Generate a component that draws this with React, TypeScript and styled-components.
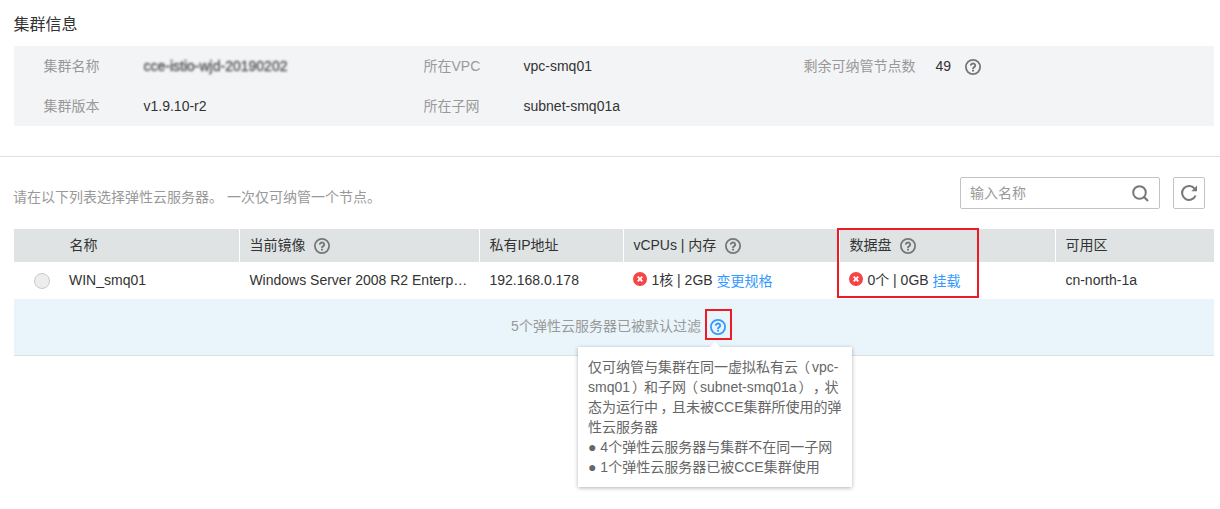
import React from "react";
import styled, { createGlobalStyle } from "styled-components";

const GlobalStyle = createGlobalStyle`
  * { box-sizing: border-box; }
  body {
    margin: 0;
    background: #fff;
    overflow: hidden;
    font: 14px/20px "Liberation Sans", "Noto Sans CJK SC", sans-serif;
    color: #333;
    text-spacing-trim: space-all;
  }
`;

const Page = styled.main`
  position: relative;
  width: 1220px;
  height: 509px;
  overflow: hidden;
`;

const Title = styled.h1`
  margin: 0;
  padding: 15px 0 0 13.5px;
  height: 46px;
  font-size: 16px;
  line-height: 20px;
  font-weight: 400;
`;

const InfoPanel = styled.dl`
  margin: 0 6px 0 14px;
  padding: 0 0 0 29.5px;
  height: 80px;
  background: #f3f4f6;
  display: grid;
  grid-template-columns: 380px 380px 1fr;
  grid-template-rows: 40px 40px;
`;

const InfoItem = styled.div<{ $labelWidth?: number }>`
  display: grid;
  grid-template-columns: ${(p) => p.$labelWidth ?? 100}px 1fr;
  align-items: center;
`;

const Label = styled.dt`
  color: #999;
`;

const Value = styled.dd`
  margin: 0;
  display: flex;
  align-items: center;
  gap: 14px;
`;

const Masked = styled.span`
  color: #555;
  -webkit-text-stroke: 0.4px #555;
  filter: blur(1.3px);
`;

const Divider = styled.hr`
  margin: 30px 0 0;
  border: 0;
  height: 1px;
  background: #dfdfdf;
`;

const Toolbar = styled.div`
  display: flex;
  align-items: center;
  height: 32px;
  margin: 20px 15px 20px 13px;
`;

const Hint = styled.p`
  margin: 8px auto 0 0;
  color: #999;
  white-space: pre;
`;

const SearchBox = styled.div`
  display: flex;
  align-items: center;
  justify-content: space-between;
  width: 200px;
  height: 32px;
  padding: 0 10px 0 9px;
  border: 1px solid #c3c3c3;
  border-radius: 2px;
  color: #999;
`;

const RefreshButton = styled.button`
  display: grid;
  place-items: center;
  width: 32px;
  height: 32px;
  margin-left: 13px;
  padding: 0;
  border: 1px solid #c3c3c3;
  border-radius: 2px;
  background: #fff;
`;

const Table = styled.section`
  margin: 0 6px 0 14px;
`;

const Row = styled.div<{ $head?: boolean }>`
  display: grid;
  grid-template-columns: 226px 240px 144px 216px 216px 1fr;
  height: ${(p) => (p.$head ? 33 : 37)}px;
  background: ${(p) => (p.$head ? "#dfe3e4" : "#fff")};
`;

const Cell = styled.div<{ $head?: boolean; $first?: boolean; $last?: boolean }>`
  display: flex;
  align-items: center;
  min-width: 0;
  padding-left: ${(p) => (p.$first ? (p.$head ? 55.4 : 20) : 9.4)}px;
  padding-bottom: ${(p) => (p.$head ? 2 : 1)}px;
  border-right: ${(p) => (p.$last ? 0 : 1)}px solid ${(p) => (p.$head ? "#fff" : "transparent")};
  white-space: nowrap;
  gap: ${(p) => (p.$head ? 9 : 4)}px;
`;

const Radio = styled.span`
  width: 16px;
  height: 16px;
  margin: 1px 15px 0 0;
  border: 1px solid #c9c9c9;
  border-radius: 50%;
  background: #ededed;
`;

const Link = styled.a`
  color: #3399ff;
  padding-top: 1px;
`;

const FilterBar = styled.div`
  display: flex;
  justify-content: center;
  align-items: center;
  height: 57px;
  padding: 0 0 2px 9px;
  border-bottom: 1px solid #d9dfe2;
  background: #e9f5fb;
  color: #999;
`;

const HelpAnchor = styled.span`
  display: flex;
  margin-left: 9px;
  padding-top: 2px;
`;

const Highlight = styled.span<{ $x: number; $y: number; $w: number; $h: number }>`
  position: absolute;
  left: ${(p) => p.$x}px;
  top: ${(p) => p.$y}px;
  width: ${(p) => p.$w}px;
  height: ${(p) => p.$h}px;
  border: 2px solid #ed1c24;
  z-index: 3;
`;

const Tooltip = styled.div`
  position: absolute;
  left: 578px;
  top: 347px;
  width: 274px;
  height: 140px;
  padding: 10px 9px 0 10px;
  background: #fff;
  color: #666;
  box-shadow: 0 1px 4px rgba(0, 0, 0, 0.3);
  z-index: 2;
  white-space: nowrap;

  &::before {
    content: "";
    position: absolute;
    left: 131px;
    top: -5px;
    border: 6px solid transparent;
    border-top: 0;
    border-bottom-color: #fff;
  }
`;

const Line = styled.div`
  height: 20px;
`;

/* Full-width punctuation whose ink sits nearer the middle of its cell */
const Punct = styled.span<{ $shift: number }>`
  display: inline-block;
  width: 14px;
  text-indent: ${(p) => p.$shift}px;
`;

const Icon = styled.svg`
  display: block;
  flex: none;
  overflow: visible;
`;

const HelpIcon = ({ color = "#777" }: { color?: string }) => (
  <Icon width="16" height="16" viewBox="0 0 16 16" fill="none" stroke={color}>
    <circle cx="8" cy="8" r="7.1" strokeWidth="1.8" />
    <path d="M5.800 6.600a2.200 2 0 1 1 3.500 1.500C8.500 8.700 8 8.900 8 9.900" strokeWidth="1.9" />
    <path d="M8 10.700v1.800" strokeWidth="2" />
  </Icon>
);

const ErrorIcon = () => (
  <Icon width="14" height="14" viewBox="0 0 14 14">
    <circle cx="7" cy="7" r="7" fill="#f54545" />
    <path d="M4.700 4.700l4.600 4.600M9.300 4.700l-4.600 4.600" stroke="#fff" strokeWidth="1.800" />
  </Icon>
);

const SearchIcon = () => (
  <Icon width="17" height="17" viewBox="0 0 17 17" fill="none" stroke="#777" strokeWidth="2">
    <circle cx="7.500" cy="7.500" r="6.300" />
    <path d="M11.800 11.800l4.200 4.200" />
  </Icon>
);

const RefreshIcon = () => (
  <Icon width="16" height="16" viewBox="0 0 16 16" fill="none" stroke="#777" strokeWidth="2">
    <path d="M14.600 10.500A7 7 0 1 1 13.600 3.600" />
    <path d="M16 .6v5.600h-5.600z" fill="#777" stroke="none" />
  </Icon>
);

const Shift = styled.span<{ $y: number }>`
  display: flex;
  margin-top: ${(p) => p.$y}px;
`;

const columns = [
  { name: "名称" },
  { name: "当前镜像", help: true },
  { name: "私有IP地址" },
  { name: "vCPUs | 内存", help: true },
  { name: "数据盘", help: true },
  { name: "可用区" },
];

export default function App() {
  return (
    <>
      <GlobalStyle />
      <Page>
        <Title>集群信息</Title>
        <InfoPanel>
          <InfoItem>
            <Label>集群名称</Label>
            <Value><Masked>cce-istio-wjd-20190202</Masked></Value>
          </InfoItem>
          <InfoItem>
            <Label>所在VPC</Label>
            <Value>vpc-smq01</Value>
          </InfoItem>
          <InfoItem $labelWidth={132}>
            <Label>剩余可纳管节点数</Label>
            <Value>49<Shift $y={2}><HelpIcon /></Shift></Value>
          </InfoItem>
          <InfoItem>
            <Label>集群版本</Label>
            <Value>v1.9.10-r2</Value>
          </InfoItem>
          <InfoItem>
            <Label>所在子网</Label>
            <Value>subnet-smq01a</Value>
          </InfoItem>
        </InfoPanel>
        <Divider />
        <Toolbar>
          <Hint>请在以下列表选择弹性云服务器。 一次仅可纳管一个节点。</Hint>
          <SearchBox>输入名称<SearchIcon /></SearchBox>
          <RefreshButton aria-label="刷新"><RefreshIcon /></RefreshButton>
        </Toolbar>
        <Table>
          <Row $head>
            {columns.map((c, i) => (
              <Cell key={c.name} $head $first={i === 0} $last={i === 5}>
                {c.name}
                {c.help && <Shift $y={3}><HelpIcon /></Shift>}
              </Cell>
            ))}
          </Row>
          <Row>
            <Cell $first><Radio />WIN_smq01</Cell>
            <Cell>Windows Server 2008 R2 Enterp…</Cell>
            <Cell>192.168.0.178</Cell>
            <Cell><Shift $y={-2}><ErrorIcon /></Shift>1核 | 2GB <Link>变更规格</Link></Cell>
            <Cell><Shift $y={-2}><ErrorIcon /></Shift>0个 | 0GB <Link>挂载</Link></Cell>
            <Cell $last>cn-north-1a</Cell>
          </Row>
          <FilterBar>
            5个弹性云服务器已被默认过滤
            <HelpAnchor><HelpIcon color="#3399ff" /></HelpAnchor>
          </FilterBar>
        </Table>
        <Highlight $x={837} $y={228} $w={142} $h={70} />
        <Highlight $x={705} $y={309} $w={27} $h={31} />
        <Tooltip>
          <Line>仅可纳管与集群在同一虚拟私有云<Punct $shift={-2}>（</Punct>vpc-</Line>
          <Line>smq01<Punct $shift={2}>）</Punct>和子网<Punct $shift={-2}>（</Punct>subnet-smq01a<Punct $shift={2}>）</Punct><Punct $shift={2.5}>，</Punct>状</Line>
          <Line>态为运行中<Punct $shift={2.5}>，</Punct>且未被CCE集群所使用的弹</Line>
          <Line>性云服务器</Line>
          <Line>● 4个弹性云服务器与集群不在同一子网</Line>
          <Line>● 1个弹性云服务器已被CCE集群使用</Line>
        </Tooltip>
      </Page>
    </>
  );
}
